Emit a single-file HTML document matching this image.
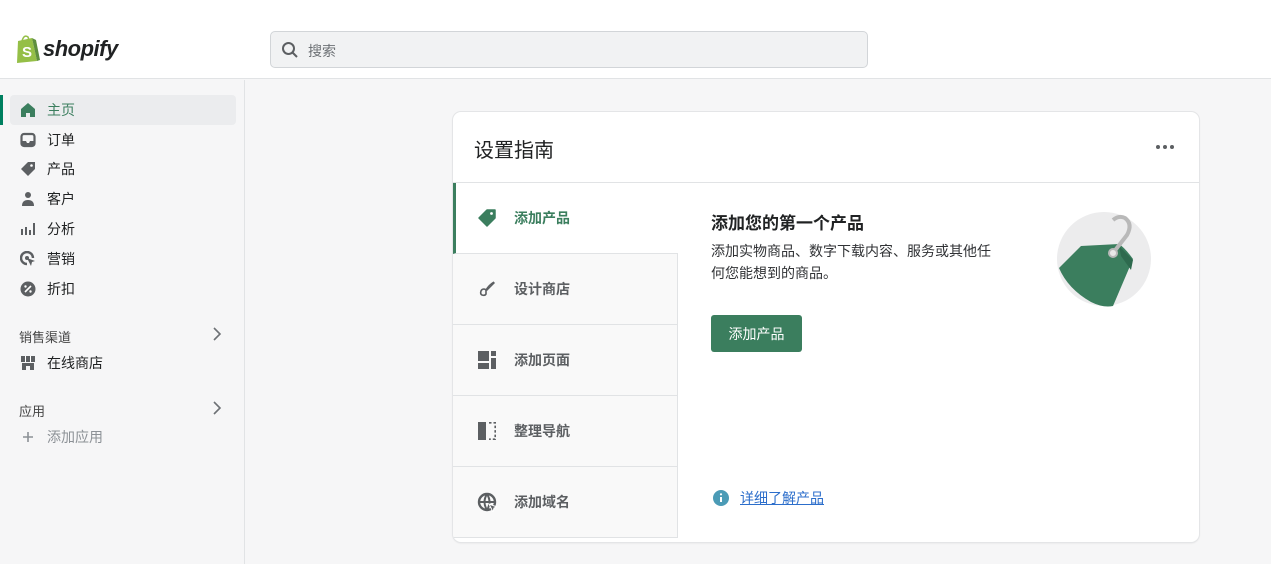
<!DOCTYPE html>
<html><head><meta charset="utf-8"><style>
*{margin:0;padding:0;box-sizing:border-box}
body{width:1271px;height:564px;overflow:hidden;background:#f6f6f7;font-family:"Liberation Sans","Noto Sans CJK SC",sans-serif;color:#202223;position:relative}
.top{position:absolute;left:0;top:0;width:1271px;height:79px;background:#fff;border-bottom:1px solid #e1e3e5}
.logo{position:absolute;left:14px;top:34px;display:flex;align-items:center}
.logo span{font-weight:bold;font-style:italic;font-size:22px;margin-left:3px;letter-spacing:-0.5px}
.search{position:absolute;left:270px;top:31px;width:598px;height:37px;background:#f1f2f3;border:1px solid #d2d5d8;border-radius:5px}
.search span{position:absolute;left:37px;top:9px;font-size:14px;color:#6d7175}
.side{position:absolute;left:0;top:80px;width:245px;height:484px;border-right:1px solid #e1e3e5;background:#f6f6f7}
.it{position:absolute;left:20px;height:28px;display:flex;align-items:center;font-size:14px;color:#202223}
.it svg{width:16px;height:16px;margin-right:11px}
.sel{position:absolute;left:10px;top:95px;width:226px;height:30px;background:#ebecee;border-radius:4px}
.bar{position:absolute;left:0;top:95px;width:3px;height:30px;background:#008060}
.sec{position:absolute;left:19px;font-size:13px;color:#444}
.chev{position:absolute;left:211px}
.card{position:absolute;left:453px;top:112px;width:746px;height:430px;background:#fff;border-radius:8px;box-shadow:0 0 0 1px #e4e5e7,0 1px 2px rgba(0,0,0,.1);overflow:hidden}
.ttl{position:absolute;left:21px;top:22px;font-size:20px}
.dots{position:absolute;left:703px;top:33px}
.hr{position:absolute;left:0;top:70px;width:746px;height:1px;background:#e1e3e5}
.tab{position:absolute;left:0;width:225px;height:71px;background:#f9f9f9;border-right:1px solid #e1e3e5;border-bottom:1px solid #e1e3e5;display:flex;align-items:center;padding-left:24px;font-size:14px;font-weight:bold;color:#5c5f62}
.tab svg{width:20px;height:20px;margin-right:17px}
.tab.a{background:#fff;border-right:none;border-left:3px solid #3b7e5e;color:#3b7e5e;padding-left:21px}
.h2{position:absolute;left:258px;top:97px;font-size:17px;font-weight:bold}
.p{position:absolute;left:258px;top:128px;width:292px;font-size:14px;line-height:22px;color:#303235}
.btn{position:absolute;left:258px;top:203px;width:91px;height:37px;background:#3b7e5e;border-radius:3px;color:#fff;font-size:14px;display:flex;align-items:center;justify-content:center}
.lnk{position:absolute;left:259px;top:376px;font-size:14px;color:#2c6ecb;display:flex;align-items:center}
.lnk span{text-decoration:underline;margin-left:10px}
</style></head><body>
<div class="top">
 <div class="logo"><svg width="26" height="30" viewBox="0 0 26 30"><path d="M4 7 L18 4 L23 27 L3 29 Z" fill="#95bf47"/><path d="M18 4 L23 27 L26 26 L22 6Z" fill="#5e8e3e"/><path d="M8 7 Q10 0 14 3 L15 6" fill="none" stroke="#95bf47" stroke-width="1.5"/><text x="8" y="23" font-size="15" font-weight="bold" fill="#fff" font-family="Liberation Sans">S</text></svg><span>shopify</span></div>
 <div class="search"><svg style="position:absolute;left:10px;top:9px" width="18" height="18" viewBox="0 0 18 18"><circle cx="7.5" cy="7.5" r="5.5" fill="none" stroke="#5c5f62" stroke-width="2"/><path d="M11.5 11.5L16 16" stroke="#5c5f62" stroke-width="2"/></svg><span>搜索</span></div>
</div>
<div class="side"></div>
<div class="sel"></div><div class="bar"></div>
<div class="it" style="top:96px;color:#3b7e5e"><svg viewBox="0 0 16 16"><path d="M8 1L1 7v8h5v-4h4v4h5V7z" fill="#3b7e5e"/></svg>主页</div>
<div class="it" style="top:126px"><svg viewBox="0 0 16 16"><rect x="1.5" y="2" width="13" height="12" rx="2.5" fill="none" stroke="#5c5f62" stroke-width="2.2"/><path d="M2 9h4l1 2h2l1-2h4v5H2z" fill="#5c5f62"/></svg>订单</div>
<div class="it" style="top:155px"><svg viewBox="0 0 16 16"><path d="M8 1h7v7l-7 7-7-7z" fill="#5c5f62"/><circle cx="11.5" cy="4.5" r="1.3" fill="#fff"/></svg>产品</div>
<div class="it" style="top:185px"><svg viewBox="0 0 16 16"><circle cx="8" cy="4" r="3" fill="#5c5f62"/><path d="M2 15q0-6 6-6t6 6z" fill="#5c5f62"/></svg>客户</div>
<div class="it" style="top:215px"><svg viewBox="0 0 16 16"><path d="M2 8v6M6 6v8M10 9v5M14 2v12" stroke="#5c5f62" stroke-width="2"/></svg>分析</div>
<div class="it" style="top:245px"><svg viewBox="0 0 16 16"><path d="M7 13A6 6 0 1 1 13 7" fill="none" stroke="#5c5f62" stroke-width="2.4"/><circle cx="7" cy="7" r="2" fill="#5c5f62"/><path d="M7 7l8 3-3 1-1 4z" fill="#5c5f62"/></svg>营销</div>
<div class="it" style="top:275px"><svg viewBox="0 0 16 16"><circle cx="8" cy="8" r="7.5" fill="#5c5f62"/><path d="M5 11l6-6" stroke="#fff" stroke-width="1.6"/><circle cx="5.5" cy="5.5" r="1.2" fill="#fff"/><circle cx="10.5" cy="10.5" r="1.2" fill="#fff"/></svg>折扣</div>
<div class="sec" style="top:327px">销售渠道</div><svg class="chev" style="top:327px" width="12" height="14" viewBox="0 0 12 14"><path d="M3 1l6 6-6 6" fill="none" stroke="#6d7175" stroke-width="1.6"/></svg>
<div class="it" style="top:349px"><svg viewBox="0 0 16 16"><path d="M1 1h14v6H1z M2 8h12v7h-4v-4H6v4H2z" fill="#5c5f62"/><path d="M5.5 1v6M10.5 1v6" stroke="#fff" stroke-width="1"/></svg>在线商店</div>
<div class="sec" style="top:401px">应用</div><svg class="chev" style="top:401px" width="12" height="14" viewBox="0 0 12 14"><path d="M3 1l6 6-6 6" fill="none" stroke="#6d7175" stroke-width="1.6"/></svg>
<div class="it" style="top:423px;color:#8c9196"><svg viewBox="0 0 16 16"><path d="M8 3v10M3 8h10" stroke="#8c9196" stroke-width="1.6"/></svg>添加应用</div>

<div class="card">
 <div class="ttl">设置指南</div>
 <svg class="dots" width="18" height="4" viewBox="0 0 18 4"><circle cx="2" cy="2" r="2" fill="#5c5f62"/><circle cx="9" cy="2" r="2" fill="#5c5f62"/><circle cx="16" cy="2" r="2" fill="#5c5f62"/></svg>
 <div class="hr"></div>
 <div class="tab a" style="top:71px"><svg viewBox="0 0 20 20"><path d="M10 2h8v8l-8 8-8-8z" fill="#3b7e5e" stroke="#3b7e5e" stroke-width="1.5" stroke-linejoin="round"/><circle cx="14.5" cy="5.5" r="1.4" fill="#fff"/></svg>添加产品</div>
 <div class="tab" style="top:142px"><svg viewBox="0 0 20 20"><path d="M17 3Q12 6 9 11M9 11a3 3 0 0 0-5 1q-1 3 1 4 3 1 4-1z" fill="none" stroke="#5c5f62" stroke-width="1.6"/><path d="M17 3l1 1-8 8-1-1z" fill="#5c5f62"/></svg>设计商店</div>
 <div class="tab" style="top:213px"><svg viewBox="0 0 20 20"><path d="M1 1h11v10H1zM14 1h5v5h-5zM14 8h5v11h-5zM1 13h11v6H1z" fill="#5c5f62"/></svg>添加页面</div>
 <div class="tab" style="top:284px"><svg viewBox="0 0 20 20"><path d="M1 1h8v18H1z" fill="#5c5f62"/><path d="M12 1.8h6.2v16.4h-6.2" fill="none" stroke="#5c5f62" stroke-width="1.6" stroke-dasharray="2.5 2"/></svg>整理导航</div>
 <div class="tab" style="top:355px"><svg viewBox="0 0 20 20"><circle cx="10" cy="10" r="8" fill="none" stroke="#5c5f62" stroke-width="2.4"/><path d="M2 10h16M10 2q-5 8 0 16M10 2q5 8 0 16" fill="none" stroke="#5c5f62" stroke-width="2"/><path d="M12 12l8 3-3 1-1 4z" fill="#5c5f62" stroke="#fff" stroke-width="1"/></svg>添加域名</div>
 <div class="h2">添加您的第一个产品</div>
 <div class="p">添加实物商品、数字下载内容、服务或其他任何您能想到的商品。</div>
 <div class="btn">添加产品</div>
 <div class="lnk"><svg width="18" height="18" viewBox="0 0 18 18"><circle cx="9" cy="9" r="8" fill="#4b9bb6"/><path d="M9 8v5" stroke="#fff" stroke-width="2"/><circle cx="9" cy="5.3" r="1.1" fill="#fff"/></svg><span>详细了解产品</span></div>
 <svg style="position:absolute;left:600px;top:92px" width="110" height="110" viewBox="0 0 110 110"><circle cx="51" cy="55" r="47" fill="#ececed"/><path d="M28 42 L66 40 Q72 44 80 55 L60 102 Q50 104 38 98 Q15 85 6 64 Z" fill="#3b7e5e"/><path d="M66 42 L80 56 L78 66 L68 52Z" fill="#2e6a4e"/><path d="M60 49 L74 31 Q80 20 72 14 Q66 11 60 16" fill="none" stroke="#b9b9b9" stroke-width="4"/><circle cx="60" cy="49" r="4" fill="#e8e8e8" stroke="#b9b9b9" stroke-width="2"/></svg>
</div>
</body></html>
